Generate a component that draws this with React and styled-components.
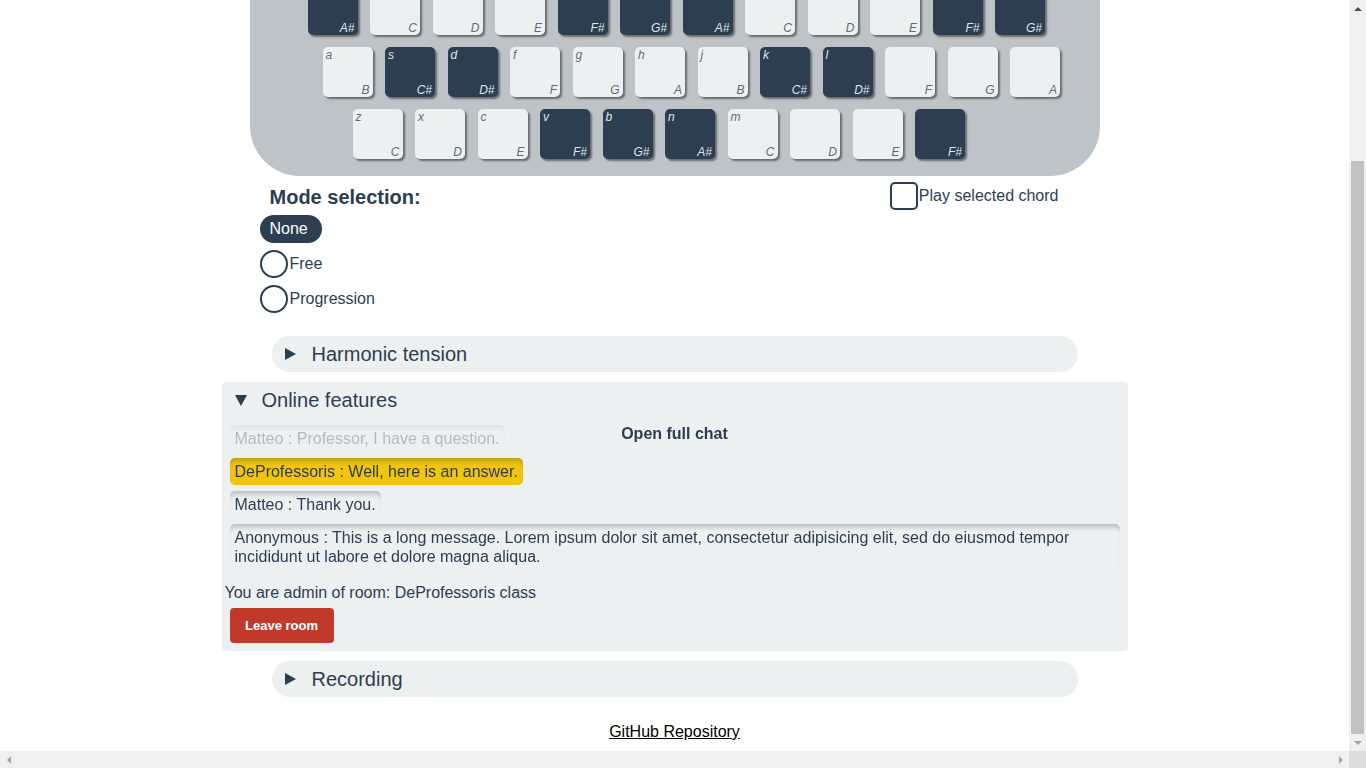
import React, {useLayoutEffect, useRef, useState} from "react";
import styled, {createGlobalStyle} from "styled-components";

const GlobalStyle = createGlobalStyle`
    body {
        margin: 0;
        font-family: "Liberation Sans", Arial, sans-serif;
        color: #2c3e50;
        background: #ffffff;
    }
`;

const Frame = styled.div`
    height: 100vh;
    display: grid;
    grid-template-columns: 1fr 17px;
    grid-template-rows: minmax(0, 1fr) 17px;
    background: #f0f0f0;
`;

const Scroller = styled.div`
    min-height: 0;
    overflow-y: auto;
    overflow-x: hidden;
    scrollbar-width: none;
    background: #ffffff;

    &::-webkit-scrollbar {
        display: none;
    }
`;

const VBar = styled.div`
    display: flex;
    flex-direction: column;
`;

const HBar = styled.div`
    display: flex;
    justify-content: space-between;
    align-items: center;
`;

const Corner = styled.div`
    background: #dcdcdc;
`;

const BarButton = styled.div`
    flex: 0 0 17px;
    width: 17px;
    height: 17px;
    display: flex;
    align-items: center;
    justify-content: center;
`;

const Arrow = styled.span`
    width: 0;
    height: 0;
    border-style: solid;
    border-color: transparent;
    ${p => ({
        up: `border-width: 0 4px 4px 4px; border-bottom-color: ${p.$color};`,
        down: `border-width: 4px 4px 0 4px; border-top-color: ${p.$color};`,
        left: `border-width: 4px 4px 4px 0; border-right-color: ${p.$color};`,
        right: `border-width: 4px 0 4px 4px; border-left-color: ${p.$color};`,
    })[p.$dir]}
`;

const Track = styled.div`
    flex: 1;
    position: relative;
`;

const Thumb = styled.div`
    position: absolute;
    left: 2px;
    right: 2px;
    background: #c1c1c1;
`;

const Header = styled.header`
    height: 80px;
    margin-bottom: 15px;
    display: flex;
    align-items: center;
    justify-content: center;
    font-size: 28px;
    font-weight: bold;
`;

const Keyboard = styled.div`
    width: 850px;
    margin: 0 auto;
    box-sizing: border-box;
    padding: 17px 0;
    background: #bdc3c7;
    border-radius: 0 0 50px 50px;
    display: flex;
    flex-direction: column;
    gap: 12px;
`;

const KeyRow = styled.div`
    display: flex;
    gap: 12.5px;
    padding-left: ${p => p.$offset}px;
`;

const Key = styled.div`
    width: 50px;
    height: 50px;
    box-sizing: border-box;
    padding: 1px 3px 0 3px;
    border-radius: 5px;
    display: flex;
    flex-direction: column;
    justify-content: space-between;
    background: ${p => p.$black ? "#2c3e50" : "#ecf0f1"};
    color: ${p => p.$black ? "#dfe6e9" : "#5d6d75"};
    box-shadow: 2px 2px 2px rgba(0, 0, 0, 0.45);
    font-style: italic;
    font-size: 12px;
    line-height: 14px;
`;

const KeyLetter = styled.span`
    height: 14px;
`;

const KeyNote = styled.span`
    align-self: flex-end;
`;

const ModeBar = styled.div`
    width: 850px;
    margin: 0 auto;
    box-sizing: border-box;
    padding: 7px 41px 0 20px;
    display: flex;
    justify-content: space-between;
    align-items: center;
`;

const ModeTitle = styled.h3`
    margin: 0;
    font-size: 20px;
    line-height: 28px;
`;

const ChordToggle = styled.label`
    display: flex;
    align-items: center;
    gap: 1px;
    margin-top: -2px;
    font-size: 16px;
`;

const CheckBox = styled.input`
    appearance: none;
    width: 28px;
    height: 28px;
    margin: 0;
    box-sizing: border-box;
    border: 2px solid #2c3e50;
    border-radius: 5px;
    background: transparent;
`;

const ModeList = styled.div`
    width: 850px;
    margin: 4px auto 0;
    box-sizing: border-box;
    padding-left: 10px;
    display: flex;
    flex-direction: column;
    align-items: flex-start;
    gap: 7px;
`;

const ModeOption = styled.label`
    display: flex;
    align-items: center;
    gap: 2px;
    height: 28px;
    box-sizing: border-box;
    padding: ${p => p.$selected ? "0 14px 0 10px" : "0"};
    border-radius: 14px;
    background: ${p => p.$selected ? "#2c3e50" : "transparent"};
    color: ${p => p.$selected ? "#ffffff" : "#2c3e50"};
    font-size: 16px;
`;

const RadioDot = styled.input`
    appearance: none;
    display: ${p => p.$hidden ? "none" : "block"};
    width: 28px;
    height: 28px;
    margin: 0;
    box-sizing: border-box;
    border: 2px solid #2c3e50;
    border-radius: 50%;
`;

const Sections = styled.div`
    margin-top: 23px;
    display: flex;
    flex-direction: column;
    align-items: center;
    gap: 10px;
`;

const Section = styled.details`
    width: 806px;
    background: #ecf0f1;
    border-radius: 18px;

    &[open] {
        width: 906px;
        border-radius: 4px;
    }
`;

const Summary = styled.summary`
    list-style: none;
    height: 36px;
    display: flex;
    align-items: center;
    gap: ${p => p.$open ? 15 : 16}px;
    padding-left: 13px;
    font-size: 20px;
    cursor: pointer;

    &::-webkit-details-marker {
        display: none;
    }
`;

const Triangle = styled.span`
    width: 0;
    height: 0;
    border-style: solid;
    border-color: ${p => p.$open
        ? "#2c3e50 transparent transparent transparent"
        : "transparent transparent transparent #2c3e50"};
    border-width: ${p => p.$open ? "11px 6px 0 6px" : "6.5px 0 6.5px 11px"};
`;

const ChatArea = styled.div`
    position: relative;
    padding: 7px 8px 6px;
    display: flex;
    flex-direction: column;
    align-items: flex-start;
    gap: 6px;
`;

const OpenChat = styled.a`
    position: absolute;
    top: 6px;
    left: 50%;
    transform: translateX(-50%);
    font-size: 16px;
    font-weight: bold;
    line-height: 19px;
    color: #2c3e50;
    text-decoration: none;
    white-space: nowrap;
`;

const Message = styled.div`
    max-width: 100%;
    box-sizing: border-box;
    padding: 4px 5px;
    border-radius: 5px;
    font-size: 16px;
    line-height: 19px;
    background: ${p => p.$highlight ? "#f1c40f" : "transparent"};
    box-shadow: inset 0 6px 5px -3px rgba(0, 0, 0, 0.22);
    opacity: ${p => p.$faded ? 0.3 : 1};
`;

const AdminNote = styled.p`
    margin: 8px 0 0;
    padding-left: 3px;
    font-size: 16px;
    line-height: 18px;
`;

const LeaveButton = styled.button`
    display: block;
    width: 104px;
    height: 35px;
    margin: 6px 0 8px 8px;
    border: none;
    border-radius: 4px;
    background: #c0392b;
    color: #ffffff;
    font-family: "Liberation Sans", Arial, sans-serif;
    font-size: 13px;
    font-weight: bold;
`;

const Footer = styled.footer`
    padding: 26px 0 10px;
    text-align: center;
    font-size: 16px;
    line-height: 18px;

    a {
        color: #000000;
        text-decoration: underline;
    }
`;

const rows = [
    {offset: 28, keys: [
        ["", "G"], ["", "A"], ["", "B"], ["", "C#"], ["", "D#"], ["", "F"],
        ["", "G"], ["", "A"], ["", "B"], ["", "C#"], ["", "D#"], ["", "F"],
    ]},
    {offset: 58, keys: [
        ["q", "A#"], ["w", "C"], ["e", "D"], ["r", "E"], ["t", "F#"], ["y", "G#"],
        ["u", "A#"], ["i", "C"], ["o", "D"], ["p", "E"], ["", "F#"], ["", "G#"],
    ]},
    {offset: 73, keys: [
        ["a", "B"], ["s", "C#"], ["d", "D#"], ["f", "F"], ["g", "G"], ["h", "A"],
        ["j", "B"], ["k", "C#"], ["l", "D#"], ["", "F"], ["", "G"], ["", "A"],
    ]},
    {offset: 103, keys: [
        ["z", "C"], ["x", "D"], ["c", "E"], ["v", "F#"], ["b", "G#"], ["n", "A#"],
        ["m", "C"], ["", "D"], ["", "E"], ["", "F#"],
    ]},
];

const messages = [
    {author: "Matteo", text: "Professor, I have a question.", faded: true},
    {author: "DeProfessoris", text: "Well, here is an answer.", highlight: true},
    {author: "Matteo", text: "Thank you."},
    {author: "Anonymous", text: "This is a long message. Lorem ipsum dolor sit amet, consectetur adipisicing elit, sed do eiusmod tempor incididunt ut labore et dolore magna aliqua."},
];

const modes = ["None", "Free", "Progression"];

function CollapsedSection({title}) {
    return <Section>
        <Summary><Triangle/>{title}</Summary>
    </Section>
}

export default function App() {

    const scroller = useRef(null)
    const [thumb, setThumb] = useState({top: 0, size: 0})

    const updateThumb = () => {
        const el = scroller.current
        if (!el) return
        const track = el.clientHeight - 34
        setThumb({
            top: el.scrollTop / el.scrollHeight * track,
            size: el.clientHeight / el.scrollHeight * track,
        })
    }

    // the page is shown scrolled to its end
    useLayoutEffect(() => {
        const el = scroller.current
        if (el) el.scrollTop = el.scrollHeight
        updateThumb()
    }, [])

    return <Frame>
        <GlobalStyle/>
        <Scroller ref={scroller} onScroll={updateThumb}>
            <Header>Chord Keyboard</Header>
            <Keyboard>
                {rows.map((row, i) =>
                    <KeyRow key={i} $offset={row.offset}>
                        {row.keys.map(([letter, note], j) =>
                            <Key key={j} $black={note.includes("#")}>
                                <KeyLetter>{letter}</KeyLetter>
                                <KeyNote>{note}</KeyNote>
                            </Key>
                        )}
                    </KeyRow>
                )}
            </Keyboard>
            <ModeBar>
                <ModeTitle>Mode selection:</ModeTitle>
                <ChordToggle>
                    <CheckBox type="checkbox"/>
                    Play selected chord
                </ChordToggle>
            </ModeBar>
            <ModeList>
                {modes.map(mode =>
                    <ModeOption key={mode} $selected={mode === "None"}>
                        <RadioDot type="radio" name="mode" $hidden={mode === "None"} defaultChecked={mode === "None"}/>
                        {mode}
                    </ModeOption>
                )}
            </ModeList>
            <Sections>
                <CollapsedSection title="Harmonic tension"/>
                <Section open>
                    <Summary $open><Triangle $open/>Online features</Summary>
                    <ChatArea>
                        {messages.map((m, i) =>
                            <Message key={i} $faded={m.faded} $highlight={m.highlight}>
                                {m.author} : {m.text}
                            </Message>
                        )}
                        <OpenChat href="#">Open full chat</OpenChat>
                    </ChatArea>
                    <AdminNote>You are admin of room: DeProfessoris class</AdminNote>
                    <LeaveButton>Leave room</LeaveButton>
                </Section>
                <CollapsedSection title="Recording"/>
            </Sections>
            <Footer>
                <a href="#">GitHub Repository</a>
            </Footer>
        </Scroller>
        <VBar>
            <BarButton><Arrow $dir="up" $color="#505050"/></BarButton>
            <Track>
                <Thumb style={{top: thumb.top, height: thumb.size}}/>
            </Track>
            <BarButton><Arrow $dir="down" $color="#a3a3a3"/></BarButton>
        </VBar>
        <HBar>
            <BarButton><Arrow $dir="left" $color="#a3a3a3"/></BarButton>
            <BarButton><Arrow $dir="right" $color="#a3a3a3"/></BarButton>
        </HBar>
        <Corner/>
    </Frame>
}
